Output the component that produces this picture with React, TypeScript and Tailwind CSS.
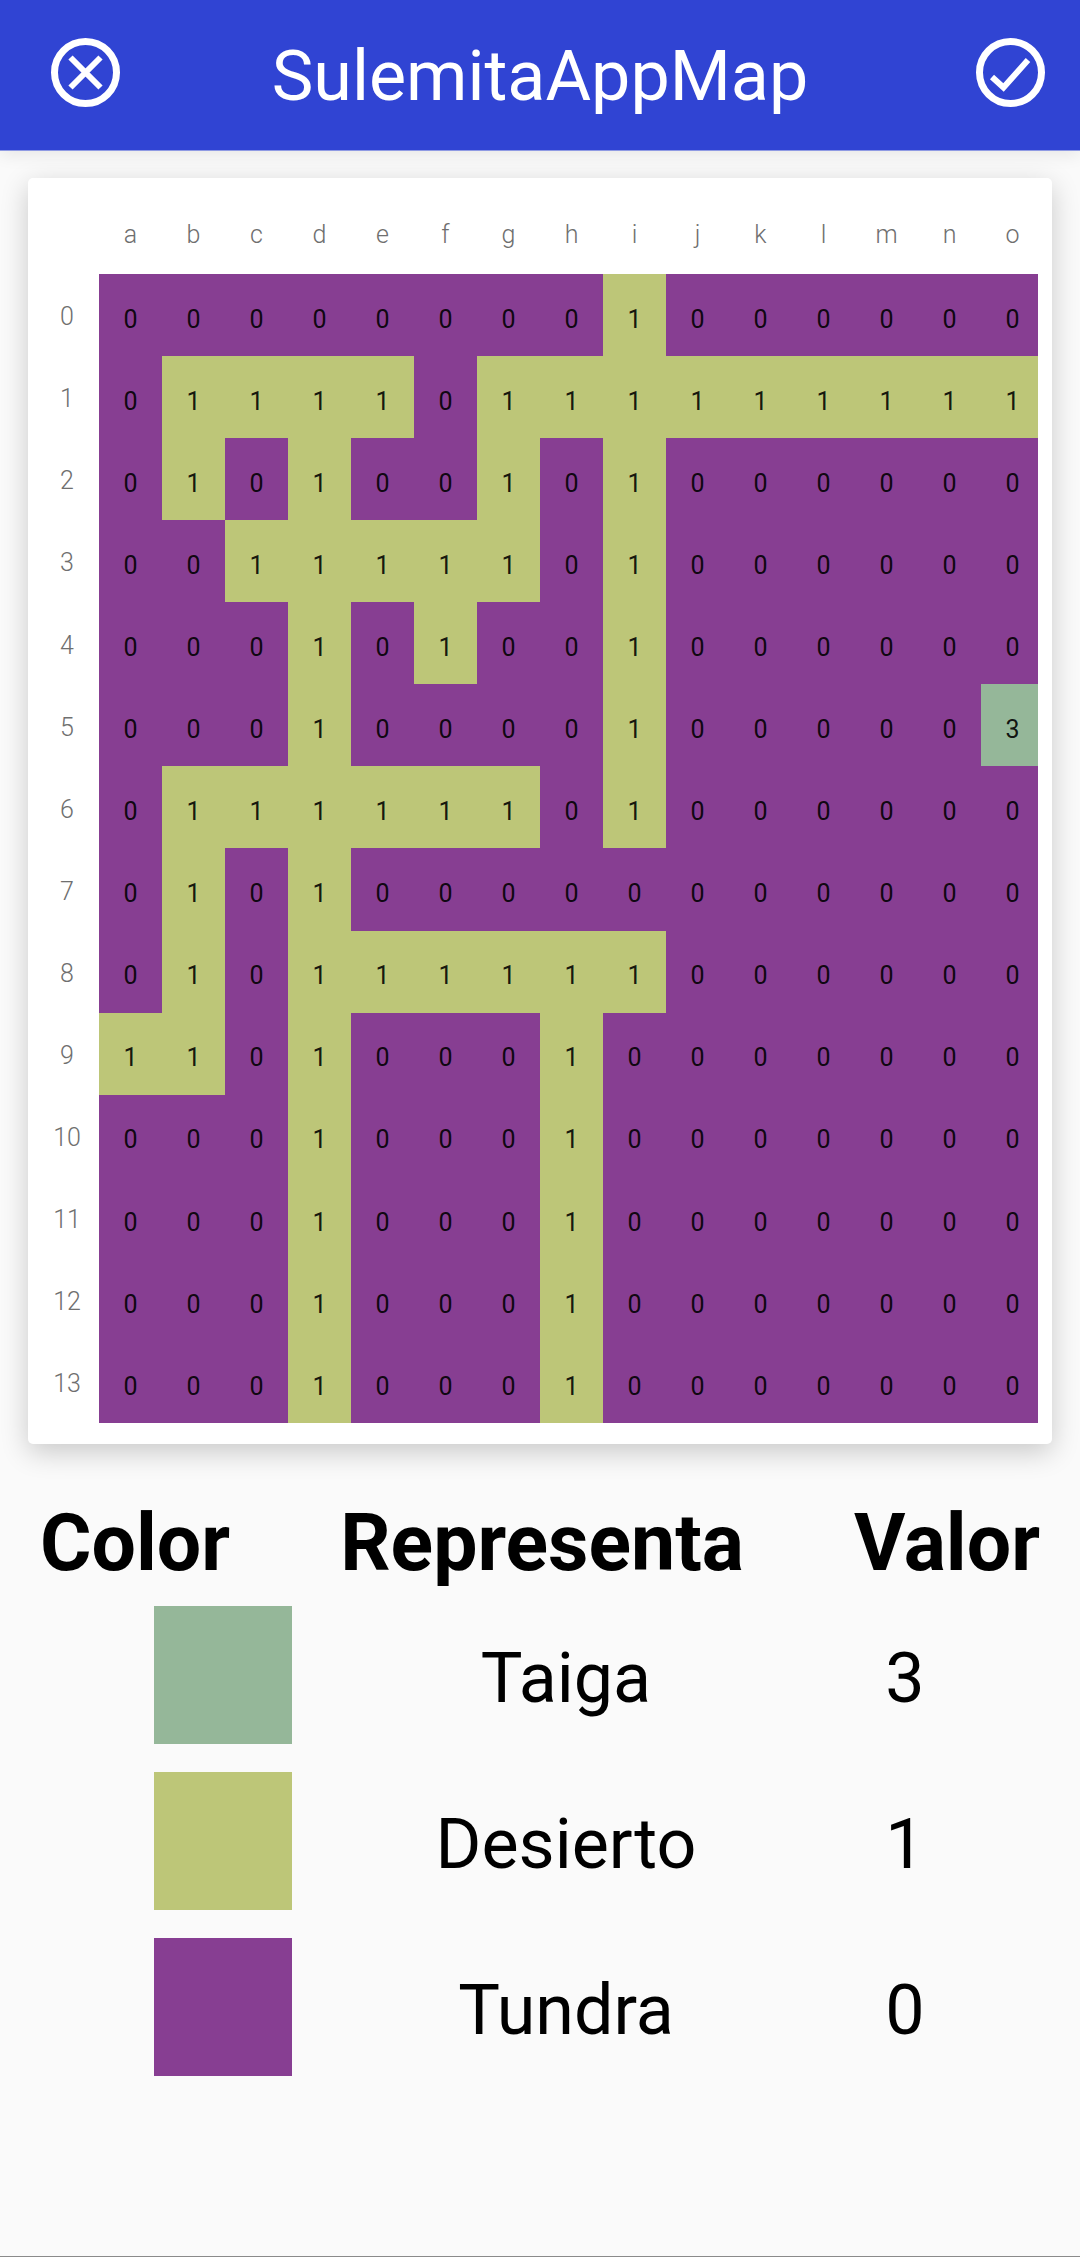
const columns = ['a', 'b', 'c', 'd', 'e', 'f', 'g', 'h', 'i', 'j', 'k', 'l', 'm', 'n', 'o'];

const board = [
  '000000001000000',
  '011110111111111',
  '010100101000000',
  '001111101000000',
  '000101001000000',
  '000100001000003',
  '011111101000000',
  '010100000000000',
  '010111111000000',
  '110100010000000',
  '000100010000000',
  '000100010000000',
  '000100010000000',
  '000100010000000',
];

const cellColor: Record<string, string> = {
  '0': 'bg-[#873e92]',
  '1': 'bg-[#bdc678]',
  '3': 'bg-[#95b799]',
};

const legend = [
  { color: 'bg-[#95b799]', name: 'Taiga', value: 3 },
  { color: 'bg-[#bdc678]', name: 'Desierto', value: 1 },
  { color: 'bg-[#873e92]', name: 'Tundra', value: 0 },
];

function CloseIcon() {
  return (
    <svg width="69" height="69" viewBox="0 0 69 69" fill="none" stroke="white">
      <circle cx="34.5" cy="34.5" r="31" strokeWidth="7" />
      <path d="M19.5 19.5L49.5 49.5M49.5 19.5L19.5 49.5" strokeWidth="6" />
    </svg>
  );
}

function CheckIcon() {
  return (
    <svg width="69" height="69" viewBox="0 0 69 69" fill="none" stroke="white">
      <circle cx="34.5" cy="34.5" r="31" strokeWidth="7" />
      <path d="M16 39L27.5 49.5L52 22" strokeWidth="6" />
    </svg>
  );
}

export default function App() {
  return (
    <div className="h-[2257px] flex flex-col bg-[#fafafa] border-b border-[#8a8a8a] font-['Roboto',sans-serif] overflow-hidden">
      <header className="h-[151px] shrink-0 flex items-center justify-between pl-[51px] pr-[35px] pb-[5px] bg-[#3044d3] border-b border-[#8f9ae3] shadow-[0_4px_16px_rgba(0,0,0,0.08)] text-white">
        <CloseIcon />
        <h1 className="text-[70px] leading-none pt-[7px] mr-[16px]">SulemitaAppMap</h1>
        <CheckIcon />
      </header>

      <main className="mt-[27px] mx-[28px] h-[1266px] shrink-0 bg-white rounded-[5px] shadow-[0_8px_28px_rgba(0,0,0,0.2)] pt-[42px] pl-[71px]">
        <div className="w-[945px] h-[54px] grid grid-cols-[repeat(15,63px)]">
          {columns.map((c) => (
            <span key={c} className="text-center text-[25px] font-light leading-[30px] text-[#6f6f6f]">
              {c}
            </span>
          ))}
        </div>
        <div className="flex">
          <div className="-ml-[71px] w-[71px] pl-[12px] grid grid-rows-[repeat(14,1fr)]">
            {board.map((_, i) => (
              <span key={i} className="w-[54px] pt-[4px] flex items-center justify-center text-[25px] font-light text-[#6f6f6f]">
                {i}
              </span>
            ))}
          </div>
          <div className="w-[939px] h-[1149px] overflow-hidden">
            <div className="w-[945px] h-[1149px] grid grid-cols-[repeat(15,63px)] grid-rows-[repeat(14,1fr)]">
              {board.map((row, r) =>
                row.split('').map((v, c) => (
                  <div
                    key={`${r}-${c}`}
                    className={`${cellColor[v]} pt-[9px] flex items-center justify-center text-[25px] text-black/90`}
                  >
                    {v}
                  </div>
                )),
              )}
            </div>
          </div>
        </div>
      </main>

      <section className="mt-[57px] flex justify-between px-[40px] text-[78.75px] leading-[84px] font-bold text-black">
        <span>Color</span>
        <span>Representa</span>
        <span>Valor</span>
      </section>

      <section className="mt-[21px] flex flex-col gap-[28px] text-[70px] text-black">
        {legend.map((item) => (
          <div key={item.name} className="flex items-center pl-[154px] h-[138px]">
            <div className={`${item.color} w-[138px] h-[138px]`} />
            <span className="w-[548px] text-center pt-[6px]">{item.name}</span>
            <span className="w-[130px] text-center pt-[6px]">{item.value}</span>
          </div>
        ))}
      </section>
    </div>
  );
}
